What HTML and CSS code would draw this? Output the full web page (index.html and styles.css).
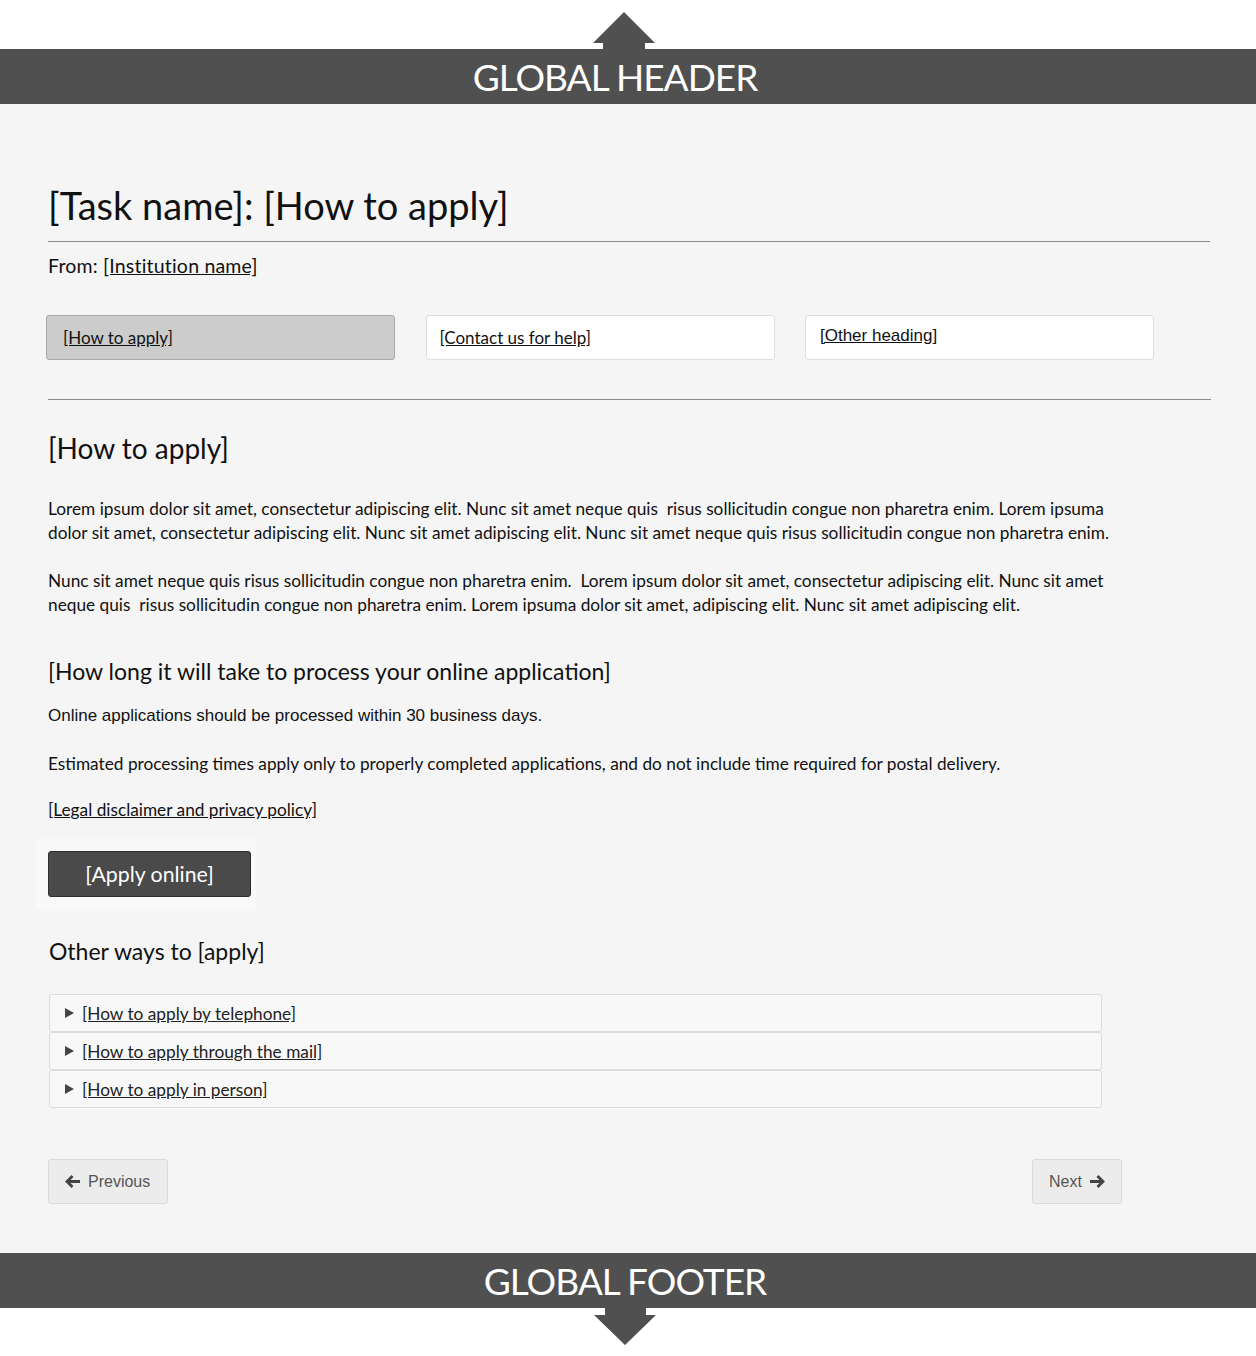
FILE: index.html
```html
<!DOCTYPE html>
<html lang="en">
<head>
<meta charset="utf-8">
<title>[Task name]: [How to apply]</title>
<link rel="stylesheet" href="styles.css">
</head>
<body>
<div class="top-strip">
  <svg class="arrow-up" width="62" height="37" viewBox="0 0 62 37" aria-hidden="true">
    <polygon points="31,0 62,31 52,31 52,37 10,37 10,31 0,31" fill="#505050"/>
  </svg>
</div>
<header class="global-bar header-bar"><span class="bar-label">GLOBAL HEADER</span></header>

<main class="page">
  <h1 class="title">[Task name]: [How to apply]</h1>
  <hr class="rule">
  <p class="from">From: <a href="#">[Institution name]</a></p>

  <nav class="tabs">
    <a class="tab tab-active" href="#">[How to apply]</a>
    <a class="tab" href="#">[Contact us for help]</a>
    <a class="tab tab-alt" href="#">[Other heading]</a>
  </nav>
  <hr class="rule rule-2">

  <h2 class="section-title">[How to apply]</h2>
  <p class="body-text p1">Lorem ipsum dolor sit amet, consectetur adipiscing elit. Nunc sit amet neque quis&nbsp; risus sollicitudin congue non pharetra enim. Lorem ipsuma dolor sit amet, consectetur adipiscing elit. Nunc sit amet adipiscing elit. Nunc sit amet neque quis risus sollicitudin congue non pharetra enim.</p>
  <p class="body-text p2">Nunc sit amet neque quis risus sollicitudin congue non pharetra enim.&nbsp; Lorem ipsum dolor sit amet, consectetur adipiscing elit. Nunc sit amet neque quis&nbsp; risus sollicitudin congue non pharetra enim. Lorem ipsuma dolor sit amet, adipiscing elit. Nunc sit amet adipiscing elit.</p>

  <h3 class="sub-title">[How long it will take to process your online application]</h3>
  <p class="arial-text">Online applications should be processed within 30 business days.</p>
  <p class="body-text p-est">Estimated processing times apply only to properly completed applications, and do not include time required for postal delivery.</p>
  <p class="body-text p-legal"><a href="#">[Legal disclaimer and privacy policy]</a></p>

  <div class="apply-wrap"><a class="apply-btn" href="#">[Apply online]</a></div>

  <h3 class="sub-title other">Other ways to [apply]</h3>
  <div class="accordion">
    <div class="acc-row"><svg class="caret" width="9" height="10" viewBox="0 0 9 10"><polygon points="0,0 9,5 0,10" fill="#444"/></svg><a href="#">[How to apply by telephone]</a></div>
    <div class="acc-row"><svg class="caret" width="9" height="10" viewBox="0 0 9 10"><polygon points="0,0 9,5 0,10" fill="#444"/></svg><a href="#">[How to apply through the mail]</a></div>
    <div class="acc-row"><svg class="caret" width="9" height="10" viewBox="0 0 9 10"><polygon points="0,0 9,5 0,10" fill="#444"/></svg><a href="#">[How to apply in person]</a></div>
  </div>

  <div class="pager">
    <a class="pager-btn" href="#"><svg class="pg-arrow" width="15" height="13" viewBox="0 0 15 13"><polygon points="0,6.5 6.5,0 8.5,2 5.5,5 15,5 15,8 5.5,8 8.5,11 6.5,13" fill="#444"/></svg>Previous</a>
    <a class="pager-btn" href="#">Next<svg class="pg-arrow pg-right" width="15" height="13" viewBox="0 0 15 13"><polygon points="15,6.5 8.5,0 6.5,2 9.5,5 0,5 0,8 9.5,8 6.5,11 8.5,13" fill="#444"/></svg></a>
  </div>
</main>

<footer class="global-bar footer-bar"><span class="bar-label">GLOBAL FOOTER</span></footer>
<div class="bottom-strip">
  <svg class="arrow-down" width="62" height="37" viewBox="0 0 62 37" aria-hidden="true">
    <polygon points="11,0 52,0 52,7 62,7 31,37 0,7 11,7" fill="#505050"/>
  </svg>
</div>
</body>
</html>
```

FILE: styles.css
```css
* { box-sizing: border-box; }
html, body { margin: 0; padding: 0; }
body {
  background: #ffffff;
  font-family: Lato, "Open Sans", sans-serif;
  color: #111;
}
a { color: #111; text-decoration: underline; }

.top-strip {
  height: 49px;
  display: flex;
  justify-content: center;
  align-items: flex-end;
  padding-right: 8px;
}
.arrow-up { display: block; }

.global-bar {
  height: 55px;
  background: #505050;
  display: flex;
  justify-content: center;
  align-items: center;
}
.bar-label {
  color: #fff;
  font-family: Lato, sans-serif;
  font-size: 37px;
  letter-spacing: -1px;
  line-height: 55px;
}
.header-bar .bar-label { margin-right: 26px; }
.footer-bar .bar-label { margin-left: -6px; }

.bottom-strip {
  height: 48px;
  display: flex;
  justify-content: center;
  align-items: flex-start;
  padding-right: 6px;
}
.arrow-down { display: block; }

.page {
  background: #f5f5f5;
  padding: 77px 46px 49px 48px;
}

.title {
  margin: 0;
  font-weight: 400;
  font-size: 38px;
  line-height: 48px;
}
.rule {
  border: 0;
  border-top: 1px solid #8a8a8a;
  margin: 12px 0 0 0;
  height: 0;
}
.from {
  margin: 12px 0 0 0;
  font-size: 19.5px;
  letter-spacing: 0.2px;
  line-height: 24px;
}

.tabs {
  display: flex;
  gap: 30.5px;
  margin: 37px 0 0 -2px;
}
.tab {
  width: 349px;
  height: 45px;
  display: flex;
  align-items: center;
  padding-left: 13px;
  background: #fff;
  border: 1px solid #dedede;
  border-radius: 3px;
  font-size: 17px;
}
.tab-active {
  background: #cccccc;
  border-color: #a9a9a9;
  padding-left: 16px;
}
.tab-alt {
  font-family: "Liberation Sans", Arial, sans-serif;
  font-size: 17px;
  padding-left: 14px;
  padding-bottom: 3px;
}
.rule-2 { margin-top: 39px; margin-right: -1px; }

.section-title {
  margin: 30px 0 0 0;
  font-weight: 400;
  font-size: 28px;
  line-height: 36px;
}
.body-text {
  margin: 0;
  font-size: 17.25px;
  line-height: 24px;
}
.p1 { margin-top: 31px; max-width: 1080px; }
.p2 { margin-top: 24px; max-width: 1080px; }

.sub-title {
  margin: 38px 0 0 0;
  font-weight: 400;
  font-size: 23px;
  line-height: 32px;
}
.arial-text {
  margin: 17px 0 0 0;
  font-family: "Liberation Sans", Arial, sans-serif;
  font-size: 17px;
  line-height: 24px;
}
.p-est { margin-top: 24px; }
.p-legal { margin-top: 22px; }

.apply-wrap {
  margin: 17px 0 0 -12px;
  padding: 12px;
  width: 220px;
  background: #f9f9f9;
}
.apply-btn {
  display: flex;
  justify-content: center;
  align-items: center;
  width: 203px;
  height: 46px;
  background: #4a4a4a;
  border: 1px solid #2e2e2e;
  border-radius: 3px;
  color: #fff;
  text-decoration: none;
  font-size: 21.3px;
}

.other { margin-top: 26px; margin-left: 1px; }

.accordion {
  margin: 27px 0 0 1px;
  width: 1053px;
}
.acc-row {
  height: 38px;
  display: flex;
  align-items: center;
  gap: 8px;
  padding-left: 15px;
  background: #f8f8f8;
  border: 1px solid #dcdcdc;
  border-radius: 3px;
  font-size: 17.25px;
}
.acc-row a { color: #222; }

.pager {
  margin-top: 51px;
  width: 1074px;
  display: flex;
  justify-content: space-between;
}
.pager-btn {
  height: 45px;
  display: flex;
  align-items: center;
  gap: 8px;
  padding: 0 16px;
  background: #ececec;
  border: 1px solid #dadada;
  border-radius: 3px;
  color: #555;
  text-decoration: none;
  font-family: "Liberation Sans", Arial, sans-serif;
  font-size: 16px;
}
.pager-btn:first-child { width: 120px; }
.pager-btn:last-child { width: 90px; }
```
